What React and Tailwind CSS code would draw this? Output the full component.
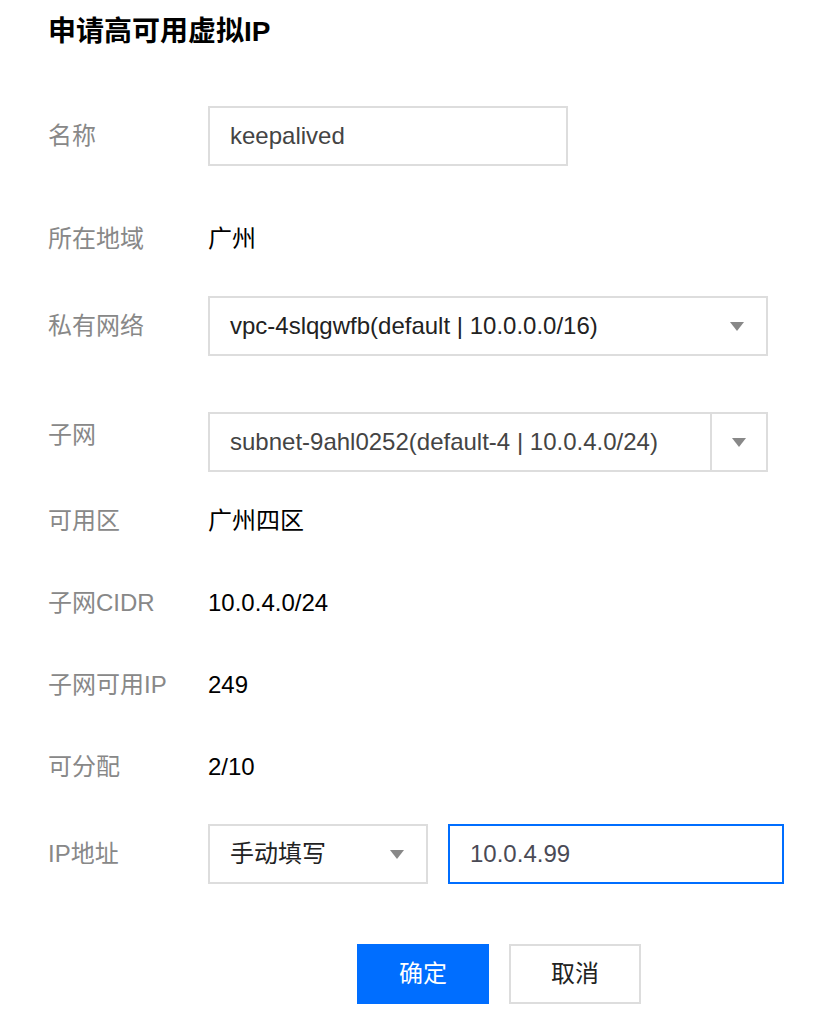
import React from 'react'

const font = { fontFamily: '"Liberation Sans", "Noto Sans CJK SC", sans-serif' }

const Arrow = () => (
    <svg width="14" height="9" viewBox="0 0 14 9" className="shrink-0">
        <path d="M0 0 H14 L7 9 Z" fill="#888888" />
    </svg>
)

const Label = ({ children, className = '' }) => (
    <div className={`w-[160px] shrink-0 text-[24px] leading-8 text-[#888888] ${className}`}>{children}</div>
)

const TextRow = ({ label, value, className = '' }) => (
    <div className={`flex h-8 items-center ${className}`}>
        <Label>{label}</Label>
        <div className="text-[24px] leading-8 text-black">{value}</div>
    </div>
)

export default function App() {
    return (
        <div className="min-h-[1016px] w-[827px] bg-white pl-12" style={font}>
            <h1 className="pt-4 text-[28px] font-bold leading-8 text-black">申请高可用虚拟IP</h1>

            {/* 名称 */}
            <div className="mt-[58px] flex h-[60px] items-center">
                <Label>名称</Label>
                <div className="flex h-[60px] w-[360px] items-center border-2 border-[#dddddd] pl-5 text-[24px] text-[#444444]">
                    keepalived
                </div>
            </div>

            <TextRow label="所在地域" value="广州" className="mt-[57px]" />

            {/* 私有网络 */}
            <div className="mt-[41px] flex h-[60px] items-center">
                <Label>私有网络</Label>
                <div className="flex h-[60px] w-[560px] items-center justify-between border-2 border-[#dddddd] pl-5 pr-[22px] text-[24px] text-[#222222]">
                    <span>vpc-4slqgwfb(default | 10.0.0.0/16)</span>
                    <Arrow />
                </div>
            </div>

            {/* 子网 */}
            <div className="mt-[56px] flex h-[60px] items-start">
                <Label className="pt-[7px]">子网</Label>
                <div className="flex h-[60px] w-[560px] items-center border-2 border-[#dddddd] text-[24px] text-[#444444]">
                    <span className="flex-1 pl-5">subnet-9ahl0252(default-4 | 10.0.4.0/24)</span>
                    <div className="flex h-full w-[56px] items-center justify-center border-l-2 border-[#dddddd]">
                        <Arrow />
                    </div>
                </div>
            </div>

            <TextRow label="可用区" value="广州四区" className="mt-[33px]" />
            <TextRow label="子网CIDR" value="10.0.4.0/24" className="mt-[50px]" />
            <TextRow label="子网可用IP" value="249" className="mt-[50px]" />
            <TextRow label="可分配" value="2/10" className="mt-[50px]" />

            {/* IP地址 */}
            <div className="mt-[41px] flex h-[60px] items-center">
                <Label>IP地址</Label>
                <div className="flex h-[60px] w-[220px] items-center justify-between border-2 border-[#dddddd] pl-5 pr-[22px] text-[24px] text-[#222222]">
                    <span>手动填写</span>
                    <Arrow />
                </div>
                <div className="ml-5 flex h-[60px] w-[336px] items-center border-2 border-[#006eff] pl-5 text-[24px] text-[#4a4a55]">
                    10.0.4.99
                </div>
            </div>

            {/* Buttons */}
            <div className="ml-[309px] mt-[60px] flex gap-5">
                <button className="h-[60px] w-[132px] bg-[#006eff] text-[24px] text-white">确定</button>
                <button className="h-[60px] w-[132px] border-2 border-[#dddddd] bg-white text-[24px] text-[#222222]">取消</button>
            </div>
        </div>
    )
}
